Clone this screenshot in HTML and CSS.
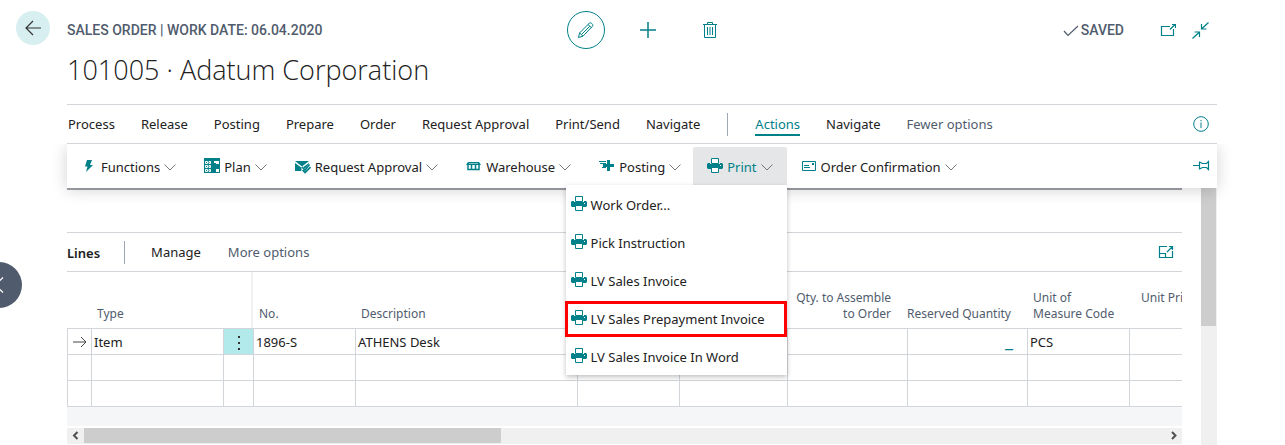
FILE: index.html
```html
<!DOCTYPE html>
<html lang="en">
<head>
<meta charset="utf-8">
<title>Sales Order</title>
<link rel="stylesheet" href="styles.css">
</head>
<body>
<svg class="sprite" aria-hidden="true">
  <symbol id="printer" viewBox="0 0 16 16">
    <path d="M4.5.5h7v5h-7z" fill="#fff" stroke="#008089"/>
    <path d="M1 5h2v1h10V5h2l1 1v4l-1 1H1l-1-1V6z" fill="#008089"/>
    <path d="M4.5 9.5h7v5h-7z" fill="#fff" stroke="#008089"/>
    <path d="M13 7h1v1h-1z" fill="#fff"/>
  </symbol>
  <symbol id="chevron" viewBox="0 0 12 16">
    <path d="M.5 5.500 6 11l5.500-5.500" fill="none" stroke="#777"/>
  </symbol>
</svg>

<button class="side-toggle" aria-label="Previous record">
  <svg width="46" height="46" viewBox="0 0 46 46"><path d="m27 15.500-8 7.500 8 7.500" fill="none" stroke="#fff" stroke-width="1.200"/></svg>
</button>

<div class="page">
  <div class="gutter">
    <button class="back" aria-label="Back">
      <svg width="34" height="34" viewBox="0 0 34 34"><path d="M25 17H10m7-7-7 7 7 7" fill="none" stroke="#333" stroke-width="1.200"/></svg>
    </button>
  </div>

  <main class="main">
    <header class="header">
      <div class="topbar">
        <span class="caption">SALES ORDER | WORK DATE: 06.04.2020</span>
        <div class="record-tools">
          <button class="tool tool-round" aria-label="Edit">
            <svg width="18" height="18" viewBox="0 0 18 18" fill="none" stroke="#008089"><path d="M1.500 16.500 2.500 12 12.500 2c1.200-1 4.300 1.500 3 3.200L6 15.200zM11 3.500l3.400 3.200M2.700 12 6 15.200M4.500 13.500l8.300-8.300"/></svg>
          </button>
          <button class="tool" aria-label="New">
            <svg width="16" height="16" viewBox="0 0 16 16"><path d="M0 8h16M8 0v16" stroke="#008089" stroke-width="1.500" fill="none"/></svg>
          </button>
          <button class="tool" aria-label="Delete">
            <svg width="14" height="17" viewBox="0 0 14 17" fill="none" stroke="#008089"><path d="M0 2.500h14M4.500 2V.5h5V2M1.500 2.500v13h11v-13M4.500 5v8M7 5v8M9.500 5v8"/></svg>
          </button>
        </div>
        <div class="status-tools">
          <span class="saved"><svg width="16" height="16" viewBox="0 0 16 16"><path d="m1 9 4 4.500L15 4" fill="none" stroke="#505c6d" stroke-width="1.200"/></svg>SAVED</span>
          <button class="tool-small" aria-label="Open in new window">
            <svg width="16" height="16" viewBox="0 0 16 16" fill="none" stroke="#008089" stroke-width="1.200"><path d="M10 4.500H1.500v9h12V7M10 7.500l5-5M12 2.500h3.500V6"/></svg>
          </button>
          <button class="tool-small" aria-label="Collapse">
            <svg width="17" height="17" viewBox="0 0 17 17" fill="none" stroke="#008089" stroke-width="1.200"><path d="m16.500.5-6.500 6M9.500 2v5h5M.5 16.500l6.500-6M2.500 10h5v5"/></svg>
          </button>
        </div>
      </div>
      <h1 class="title">101005 · Adatum Corporation</h1>
    </header>

    <nav class="menu">
      <button class="menu-item">Process</button>
      <button class="menu-item">Release</button>
      <button class="menu-item">Posting</button>
      <button class="menu-item">Prepare</button>
      <button class="menu-item">Order</button>
      <button class="menu-item">Request Approval</button>
      <button class="menu-item">Print/Send</button>
      <button class="menu-item">Navigate</button>
      <span class="divider"></span>
      <button class="menu-item active">Actions</button>
      <button class="menu-item">Navigate</button>
      <button class="menu-item muted">Fewer options</button>
      <button class="menu-info" aria-label="Information">
        <svg width="16" height="16" viewBox="0 0 16 16" fill="none" stroke="#008089"><circle cx="8" cy="8" r="7.300"/><path d="M8 6.500V12M8 4v1.300"/></svg>
      </button>
    </nav>

    <div class="actions">
      <button class="action">
        <svg class="icon" width="16" height="16" viewBox="0 0 16 16"><path d="M6 2h5L9 7h3L5 14l1.500-5.500H4z" fill="#008089"/></svg>
        Functions<svg width="12" height="16"><use href="#chevron"/></svg>
      </button>
      <button class="action">
        <svg class="icon" width="16" height="16" viewBox="0 0 16 16"><path d="M0 0h16v15H0z" fill="#008089"/><path d="M1.500 3.500h2v2h-2zM5 3.500h1.500v2H5zM1.500 7.500h2v2h-2zM5 7.500h1.500v2H5zM1.500 11.500h2v2h-2zM5 11.500h1.500v2H5z" fill="none" stroke="#fff"/><path d="M10 3h5v3h-3V5h-2zM12 11h3v3h-3z" fill="#fff"/></svg>
        Plan<svg width="12" height="16"><use href="#chevron"/></svg>
      </button>
      <button class="action">
        <svg class="icon" width="16" height="16" viewBox="0 0 16 16"><path d="M0 3h14L7 8.500zM0 5l7 5 7-5v2l-4 5-2-2-2 3H0z" fill="#008089"/><path d="m7 10 3 3 5-6" fill="none" stroke="#fff" stroke-width="3"/><path d="m7 9 3 3 4.500-5.500M7.500 12l2.500 2.500L15.500 9" fill="none" stroke="#008089" stroke-width="1.600"/></svg>
        Request Approval<svg width="12" height="16"><use href="#chevron"/></svg>
      </button>
      <button class="action">
        <svg class="icon" width="16" height="16" viewBox="0 0 16 16"><path d="M2 4h11l2 3H0z" fill="#008089"/><path d="M2 7v4.500h11V7M5.500 7v4M9.500 7v4" fill="none" stroke="#008089" stroke-width="1.500"/><path d="M3 5.500h9" stroke="#fff" stroke-width=".5"/></svg>
        Warehouse<svg width="12" height="16"><use href="#chevron"/></svg>
      </button>
      <button class="action">
        <svg class="icon" width="16" height="16" viewBox="0 0 16 16"><path d="M8 2h3v4h4v3h-4v4H8V9H4V6h4z" fill="#008089"/><path d="M0 3.500h7M1 5.500h6M3 9.500h4" stroke="#008089"/></svg>
        Posting<svg width="12" height="16"><use href="#chevron"/></svg>
      </button>
      <div class="dropdown">
        <button class="action open" aria-expanded="true">
          <svg class="icon" width="16" height="16"><use href="#printer"/></svg>
          Print<svg width="12" height="16"><use href="#chevron"/></svg>
        </button>
        <div class="dropdown-menu" role="menu">
          <button class="option" role="menuitem"><svg class="icon" width="16" height="16"><use href="#printer"/></svg>Work Order...</button>
          <button class="option" role="menuitem"><svg class="icon" width="16" height="16"><use href="#printer"/></svg>Pick Instruction</button>
          <button class="option" role="menuitem"><svg class="icon" width="16" height="16"><use href="#printer"/></svg>LV Sales Invoice</button>
          <button class="option marked" role="menuitem"><svg class="icon" width="16" height="16"><use href="#printer"/></svg>LV Sales Prepayment Invoice</button>
          <button class="option" role="menuitem"><svg class="icon" width="16" height="16"><use href="#printer"/></svg>LV Sales Invoice In Word</button>
        </div>
      </div>
      <button class="action">
        <svg class="icon" width="16" height="16" viewBox="0 0 16 16"><path d="M1.500 3.500h13v9h-13z" fill="none" stroke="#008089"/><path d="M3 7.500h5M3 9.500h6" stroke="#008089"/><path d="M11 5h2v2h-2z" fill="#008089"/></svg>
        Order Confirmation<svg width="12" height="16"><use href="#chevron"/></svg>
      </button>
      <button class="pin" aria-label="Pin">
        <svg width="17" height="16" viewBox="0 0 17 16" fill="none" stroke="#008089" stroke-width="1.200"><path d="M0 7.500h6M6.500 3.500v8M6.500 4l3 1.500h4l2-2v8l-2-2h-4l-3 1.500"/></svg>
      </button>
    </div>

    <div class="body">
      <section class="content">
        <div class="section-tail"></div>
        <div class="lines-bar">
          <h2 class="lines-title">Lines</h2>
          <span class="divider"></span>
          <button class="menu-item">Manage</button>
          <button class="menu-item muted">More options</button>
          <button class="expand" aria-label="Expand">
            <svg width="16" height="14" viewBox="0 0 16 14" fill="none" stroke="#008089" stroke-width="1.200"><path d="M9 1.500H1.500v11h13V6M1.500 8.500h6v4M9 7l5.500-5.500M11 1.500h3.500V5"/></svg>
          </button>
        </div>
        <div class="table-wrap">
          <table class="lines">
            <colgroup>
              <col class="c-mark"><col class="c-type"><col class="c-menu"><col class="c-no"><col class="c-desc"><col class="c-no"><col class="c-loc"><col class="c-qty"><col class="c-qty"><col class="c-no"><col class="c-no">
            </colgroup>
            <thead>
              <tr><th></th><th>Type</th><th class="frozen"></th><th>No.</th><th>Description</th><th></th><th></th><th class="num">Qty. to Assemble<br>to Order</th><th class="num">Reserved Quantity</th><th>Unit of<br>Measure Code</th><th class="price">Unit Price</th></tr>
            </thead>
            <tbody>
              <tr>
                <td class="mark"><svg width="14" height="12" viewBox="0 0 14 12"><path d="M0 6h13M8 1l5 5-5 5" fill="none" stroke="#444"/></svg></td>
                <td>Item</td>
                <td class="row-menu"><button class="dots" aria-label="Row options"><svg width="4" height="16" viewBox="0 0 4 16"><path d="M1 1h2v2H1zM1 7h2v2H1zM1 13h2v2H1z" fill="#333"/></svg></button></td>
                <td>1896-S</td><td>ATHENS Desk</td><td></td><td></td><td></td>
                <td class="num"><a class="blank" href="#">_</a></td>
                <td>PCS</td><td class="amount">649,40</td>
              </tr>
              <tr><td></td><td></td><td></td><td></td><td></td><td></td><td></td><td></td><td></td><td></td><td></td></tr>
              <tr><td></td><td></td><td></td><td></td><td></td><td></td><td></td><td></td><td></td><td></td><td></td></tr>
            </tbody>
          </table>
        </div>
        <div class="hscroll">
          <svg class="arrow" viewBox="0 0 17 15"><path d="M10.500 4 7 7.500l3.500 3.500" fill="none" stroke="#505050" stroke-width="2"/></svg>
          <div class="htrack"><div class="hthumb"></div></div>
          <svg class="arrow" viewBox="0 0 17 15"><path d="M7 4l3.500 3.500L7 11" fill="none" stroke="#505050" stroke-width="2"/></svg>
        </div>
      </section>
      <div class="vscroll"><div class="vthumb"></div></div>
    </div>
  </main>
</div>
</body>
</html>
```

FILE: styles.css
```css
* { box-sizing: border-box; }

body {
  margin: 0;
  overflow: hidden;
  background: #fff;
  color: #212121;
  font: 13px/20px "Noto Sans", "Open Sans", sans-serif;
}

button {
  margin: 0;
  padding: 0;
  border: 0;
  background: none;
  color: inherit;
  font: inherit;
  white-space: nowrap;
}

svg { display: block; flex: none; }
.sprite { position: absolute; width: 0; height: 0; }

.page {
  display: grid;
  grid-template-columns: 67px minmax(0, 1fr) 68px;
  min-height: 100vh;
}

.gutter { padding: 11px 0 0 16px; }

.back {
  width: 34px;
  height: 34px;
  border-radius: 50%;
  background: #d8eff1;
}

.side-toggle {
  position: absolute;
  z-index: 3;
  top: 262px;
  left: -24px;
  width: 46px;
  height: 46px;
  border-radius: 50%;
  background: #505c6d;
}

.main { display: flex; flex-direction: column; }

.header {
  height: 105px;
  border-bottom: 1px solid #d2d6da;
}

.topbar {
  display: grid;
  grid-template-columns: 1fr auto 1fr;
  align-items: center;
  padding-top: 11px;
  color: #505c6d;
}

.caption, .saved {
  font: 500 14px/20px Roboto, sans-serif;
}

.record-tools {
  display: flex;
  gap: 24px;
  padding-left: 12px;
}

.tool {
  display: flex;
  align-items: center;
  justify-content: center;
  width: 38px;
  height: 38px;
}

.tool-round {
  border: 1px solid #008089;
  border-radius: 50%;
}

.status-tools {
  display: flex;
  align-items: center;
  justify-content: flex-end;
  gap: 16px;
  padding-right: 8px;
}

.saved {
  display: flex;
  align-items: center;
  gap: 2px;
  margin-right: 20px;
}

.title {
  margin: 1px 0 0;
  font: 300 27px/40px "Open Sans", "Noto Sans", sans-serif;
}

.menu {
  display: flex;
  align-items: center;
  gap: 26px;
  height: 39px;
  padding: 0 8px 0 1px;
  border-bottom: 1px solid #d2d6da;
}

.menu-item {
  height: 24px;
  padding-top: 2px;
  border-bottom: 2px solid transparent;
}

.muted { color: #505c6d; }

.active {
  border-color: #008089;
  color: #008089;
}

.divider {
  width: 1px;
  height: 23px;
  margin: 0 1px;
  background: #a0a7b1;
}

.menu-info { margin-left: auto; }

.actions {
  position: relative;
  z-index: 2;
  display: flex;
  align-items: center;
  height: 44px;
  padding-right: 7px;
  background: #fff;
  box-shadow: 0 2px 16px rgba(0, 0, 0, 0.18);
  clip-path: inset(0 -20px -300px -20px);
}

.action {
  display: flex;
  align-items: center;
  gap: 4px;
  height: 38px;
  padding: 2px 14px 0;
}

.icon { margin-bottom: 3px; }

.open {
  border-radius: 2px 2px 0 0;
  background: #e4e6e8;
  color: #008089;
}

.pin { margin-left: auto; }

.dropdown {
  position: relative;
  margin-left: -2px;
}

.dropdown-menu {
  position: absolute;
  top: 100%;
  right: 0;
  width: 221px;
  background: #fff;
  box-shadow: 0 2px 5px rgba(0, 0, 0, 0.25);
}

.option {
  position: relative;
  display: flex;
  align-items: center;
  gap: 4px;
  width: 100%;
  height: 38px;
  padding: 2px 5px 0;
}

.marked::after {
  content: "";
  position: absolute;
  inset: 2px 0 0 -1px;
  border: 3px solid #f00;
}

.body {
  display: flex;
  flex: 1;
  gap: 19px;
}

.content {
  flex: 1;
  min-width: 0;
  border-top: 2px solid #a0a4ab;
}

.section-tail { height: 42px; }

.lines-bar {
  display: flex;
  align-items: center;
  gap: 27px;
  height: 40px;
  padding-right: 8px;
  border: 1px solid #d2d6da;
  border-width: 1px 0;
}

.lines-title {
  margin: 0;
  padding-top: 2px;
  font-size: 13px;
  font-weight: 600;
}

.lines-bar .divider { margin: 0 -1px 0 -3px; }
.expand { margin-left: auto; }

.table-wrap {
  overflow: hidden;
  padding-bottom: 19px;
  background: linear-gradient(#fff 60px, #f5f6f8 60px);
}

.lines {
  width: 1164px;
  table-layout: fixed;
  border-spacing: 0;
  background: #fff;
}

.c-mark { width: 24px; }
.c-type { width: 132px; }
.c-menu { width: 30px; }
.c-no { width: 102px; }
.c-desc { width: 222px; }
.c-loc { width: 108px; }
.c-qty { width: 120px; }

.lines th {
  height: 56px;
  padding: 0 16px 6px 6px;
  color: #505c6d;
  font-size: 12px;
  font-weight: 400;
  line-height: 16px;
  text-align: left;
  vertical-align: bottom;
  white-space: nowrap;
}

.lines th.num {
  padding-left: 0;
  text-align: right;
}

.lines th.price {
  padding: 18px 0 0 12px;
  vertical-align: top;
}

.lines th.frozen { border-right: 2px solid #f2f2f3; }

.lines td {
  height: 26px;
  padding: 0 2px;
  border: 1px solid #d2d6da;
  border-width: 1px 0 0 1px;
}

.lines tr:last-child td { height: 27px; border-bottom-width: 1px; }
.lines td.num { padding-right: 14px; text-align: right; }
.lines td.amount { padding-right: 8px; text-align: right; }
.lines td.mark { padding-left: 5px; }
.lines td.row-menu { background: #b2e9eb; text-align: center; }
.dots { vertical-align: middle; }

.blank {
  color: #008089;
  font-size: 18px;
  line-height: 16px;
  text-decoration: none;
}

.hscroll {
  display: flex;
  height: 16px;
  margin-top: 2px;
  background: #f0f0f0;
}

.arrow { width: 17px; height: 15px; }
.htrack { flex: 1; }

.hthumb {
  width: 38.6%;
  height: 15px;
  background: #cdcdcd;
}

.vscroll {
  width: 16px;
  background: #f0f0f0;
}

.vthumb {
  width: 15px;
  height: 138px;
  background: #cdcdcd;
}
```
